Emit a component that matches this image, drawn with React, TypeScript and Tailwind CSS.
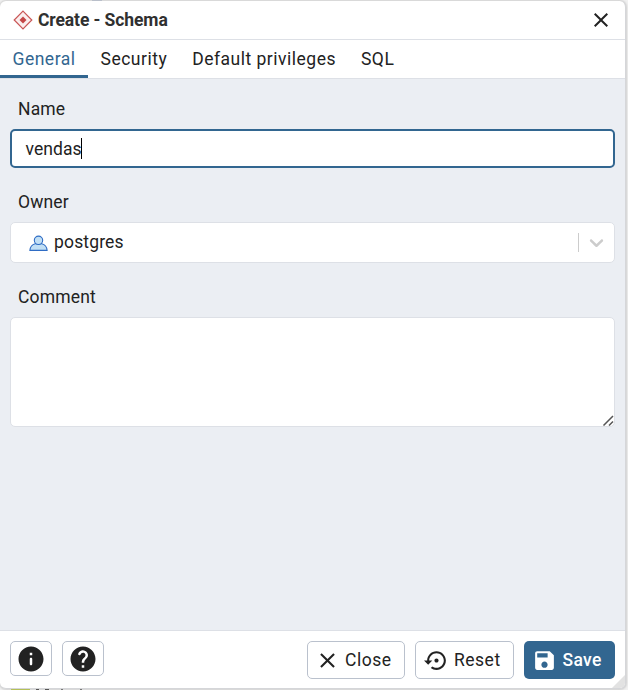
import type { ReactNode } from 'react';

const CLOSE = 'M19 6.41 17.59 5 12 10.59 6.41 5 5 6.41 10.59 12 5 17.59 6.41 19 12 13.41 17.59 19 19 17.59 13.41 12z';
const INFO = 'M12 2C6.48 2 2 6.48 2 12s4.48 10 10 10 10-4.48 10-10S17.52 2 12 2zm0 15c-.55 0-1-.45-1-1v-4c0-.55.45-1 1-1s1 .45 1 1v4c0 .55-.45 1-1 1zm1-8h-2V7h2v2z';
const HELP = 'M12 2C6.48 2 2 6.48 2 12s4.48 10 10 10 10-4.48 10-10S17.52 2 12 2zm1 17h-2v-2h2v2zm2.07-7.75-.9.92c-.5.51-.86.97-1.04 1.69-.08.32-.13.68-.13 1.14h-2v-.5c0-.46.08-.9.22-1.31.2-.58.53-1.1.95-1.52l1.24-1.26c.46-.44.68-1.1.55-1.8-.13-.72-.69-1.33-1.39-1.53-1.11-.31-2.14.32-2.47 1.27-.12.37-.43.65-.82.65h-.3C8.4 9 8 8.44 8.16 7.88c.43-1.47 1.68-2.59 3.23-2.83 1.52-.24 2.97.55 3.87 1.8 1.18 1.63.83 3.38-.19 4.4z';
const RESTORE = 'M14 12c0-1.1-.9-2-2-2s-2 .9-2 2 .9 2 2 2 2-.9 2-2zm-2-9c-4.97 0-9 4.03-9 9H0l4 4 4-4H5c0-3.87 3.13-7 7-7s7 3.13 7 7-3.13 7-7 7c-1.51 0-2.91-.49-4.06-1.3l-1.42 1.44C8.04 20.3 9.94 21 12 21c4.97 0 9-4.03 9-9s-4.03-9-9-9z';
const SAVE = 'M17 3H5c-1.11 0-2 .9-2 2v14c0 1.1.89 2 2 2h14c1.1 0 2-.9 2-2V7l-4-4zm-5 16c-1.66 0-3-1.34-3-3s1.34-3 3-3 3 1.34 3 3-1.34 3-3 3zm3-10H5V5h10v4z';

function Icon({ d, className }: { d: string; className: string }) {
  return (
    <svg viewBox="0 0 24 24" fill="currentColor" className={`shrink-0 ${className}`}>
      <path d={d} />
    </svg>
  );
}

function SchemaIcon() {
  return (
    <svg viewBox="0 0 20 20" className="h-5 w-5 shrink-0">
      <path d="M10 1.2 18.8 10 10 18.8 1.2 10z" fill="#fbeeee" stroke="#c95656" strokeWidth="1.2" />
      <path d="M10 6.5 13.5 10 10 13.5 6.5 10z" fill="#c44747" />
    </svg>
  );
}

function UserIcon() {
  return (
    <svg viewBox="0 0 20 18" className="h-[18px] w-5 shrink-0" fill="#c1dff5" stroke="#2f6cc4" strokeWidth="1.1">
      <path d="M1.900 16.400c.3-3.400 2.200-6 5.300-6.700h6.600c3.100.7 5 3.300 5.300 6.700z" />
      <circle cx="10.500" cy="6.300" r="4.200" />
    </svg>
  );
}

function Tab({ children, active = false }: { children: ReactNode; active?: boolean }) {
  return (
    <div className={`flex h-[38px] items-center px-[12.5px] tracking-[0.5px] ${active ? 'border-b-[3px] border-[#326690] pt-[4px] text-[#326690]' : 'pt-px'}`}>
      {children}
    </div>
  );
}

function Label({ children }: { children: ReactNode }) {
  return <label className="block pl-2 leading-[26px]">{children}</label>;
}

const button = 'flex items-center rounded-[5px] border border-[#bac1cd] bg-white tracking-[0.5px]';

export default function App() {
  return (
    <div className="relative h-[690px] w-[628px] overflow-hidden bg-[#f1f1f1] pt-px font-['Roboto',sans-serif] text-[17.5px] tracking-[0.16px] text-[#222]">
      <div className="relative flex h-[688px] w-[626px] flex-col overflow-hidden rounded-[6px] border-r border-b border-[#d5d6d9] bg-white shadow-[0_0_2px_1px_#d0d0d0]">
        <header className="flex h-[39px] shrink-0 items-center border-b border-[#dde0e6] pl-[12.5px] pr-[12px]">
          <SchemaIcon />
          <h1 className="ml-[5.5px] grow text-[17.5px] font-bold tracking-[-0.1px] text-[#303030]">Create - Schema</h1>
          <Icon d={CLOSE} className="h-[24px] w-[24px]" />
        </header>
        <nav className="flex h-[39px] shrink-0 border-b border-[#dde0e6]">
          <Tab active>General</Tab>
          <Tab>Security</Tab>
          <Tab>Default privileges</Tab>
          <Tab>SQL</Tab>
        </nav>
        <main className="grow bg-[#ebeef3] pl-[10px] pr-[10px] pt-[17px]">
          <Label>Name</Label>
          <div className="mt-[7px] flex h-[39px] items-center rounded-[5px] border-2 border-[#326690] bg-white pl-[13.5px]">
            <span className="pt-px tracking-[0.05px]">vendas</span><span className="-ml-[0.5px] h-[21px] w-px bg-black" />
          </div>
          <div className="mt-[21px]"><Label>Owner</Label></div>
          <div className="mt-[7px] flex h-[41px] items-center rounded-[5px] border border-[#dde0e6] bg-white pl-[17px] pr-[6px]">
            <UserIcon />
            <span className="ml-[6px] grow">postgres</span>
            <span className="mr-[6px] h-[19px] w-px bg-[#ccc]" />
            <svg viewBox="0 0 20 20" className="h-[23px] w-[23px]" fill="#ccc">
              <path d="M4.516 7.548c0.436-0.446 1.043-0.481 1.576 0l3.908 3.747 3.908-3.747c0.533-0.481 1.141-0.446 1.574 0 0.436 0.445 0.408 1.197 0 1.615-0.406 0.418-4.695 4.502-4.695 4.502-0.217 0.223-0.502 0.335-0.787 0.335s-0.570-0.112-0.789-0.335c0 0-4.287-4.084-4.695-4.502s-0.436-1.170 0-1.615z" />
            </svg>
          </div>
          <div className="mt-[21px]"><Label>Comment</Label></div>
          <div className="mt-[7px] flex h-[110px] items-end justify-end rounded-[5px] border border-[#dde0e6] bg-white">
            <svg viewBox="0 0 12 12" className="h-3 w-3" stroke="#555" strokeWidth="1.5">
              <path d="M1.500 11.500 11 2M7 11.500 11 7.500" />
            </svg>
          </div>
        </main>
        <footer className="flex h-[58px] shrink-0 items-start gap-[10px] border-t border-[#dde0e6] pl-[10px] pr-[10px] pt-[10px]">
          <button className={`${button} h-[35px] w-[42px] justify-center`}><Icon d={INFO} className="h-[30px] w-[30px]" /></button>
          <button className={`${button} h-[35px] w-[42px] justify-center`}><Icon d={HELP} className="h-[30px] w-[30px]" /></button>
          <button className={`${button} ml-auto h-[38px] w-[98px] pl-[7px]`}><Icon d={CLOSE} className="h-[25px] w-[25px]" /><span className="ml-[5px]">Close</span></button>
          <button className={`${button} h-[38px] w-[99px] pl-[8px]`}><Icon d={RESTORE} className="h-[25px] w-[25px]" /><span className="ml-[5px]">Reset</span></button>
          <button className="flex h-[38px] w-[91px] items-center rounded-[5px] bg-[#326690] pl-[8px] tracking-[0.35px] text-white"><Icon d={SAVE} className="h-[25px] w-[25px]" /><span className="ml-[5.5px] font-medium">Save</span></button>
        </footer>
        <span className="absolute right-0 bottom-0 h-[13px] w-[13px] bg-[#e2e2e2] [clip-path:polygon(100%_0,100%_100%,0_100%)]" />
      </div>
      {/* Edges of the page behind the dialog */}
      <span className="absolute top-0 left-[92px] h-px w-[10px] bg-[#b9bfca]" />
      <span className="absolute bottom-0 left-[11px] h-px w-[19px] bg-[#b4c056]" />
      <span className="absolute bottom-0 left-[36px] h-px w-[3px] bg-[#555]" />
      <span className="absolute bottom-0 left-[45px] h-px w-[4px] bg-[#555]" />
      <span className="absolute bottom-0 left-[61px] h-px w-[2px] bg-[#777]" />
      <span className="absolute bottom-0 left-[80px] h-px w-[2px] bg-[#777]" />
    </div>
  );
}
